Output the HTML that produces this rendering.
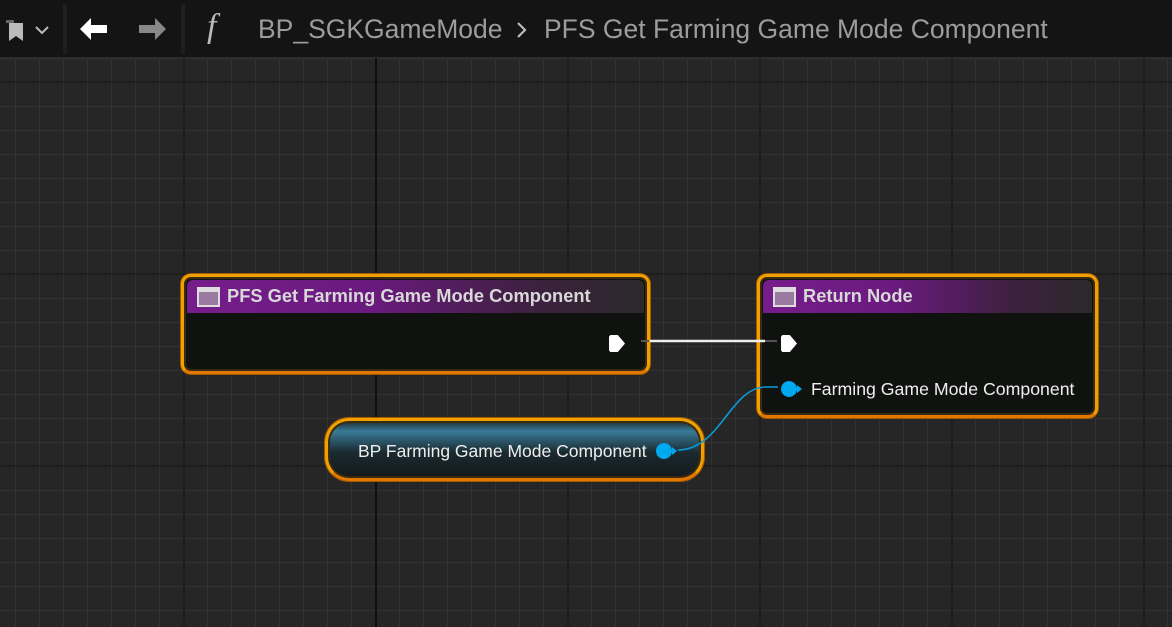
<!DOCTYPE html>
<html><head><style>
*{margin:0;padding:0;box-sizing:border-box}
body{width:1172px;height:627px;overflow:hidden;position:relative;font-family:"Liberation Sans",sans-serif;
background-color:#262626;
background-image:
linear-gradient(90deg,#0e0e0e 0 2px,transparent 2px),
linear-gradient(0deg,#0e0e0e 0 2px,transparent 2px),
linear-gradient(90deg,#1e1e1e 0 2px,transparent 2px),
linear-gradient(0deg,#1e1e1e 0 2px,transparent 2px),
linear-gradient(90deg,#323232 0 1px,transparent 1px),
linear-gradient(0deg,#323232 0 1px,transparent 1px);
background-size:2000px 2000px,2000px 2000px,192px 192px,192px 192px,24px 24px,24px 24px;
background-position:375px 0,0 274px,183px 0,0 83px,15px 0,0 11px;
background-repeat:no-repeat,no-repeat,repeat,repeat,repeat,repeat;}
.top{position:absolute;left:0;top:0;width:1172px;height:58px;background:#141414;border-bottom:1px solid #2a2a2a}
.sep{position:absolute;top:4px;width:4px;height:50px;background:#1f1f1f}
.crumb{position:absolute;top:14px;font-size:26.5px;color:#9c9c9c}
.node{position:absolute;border:3px solid #f0a000;border-radius:10px;background:#101210;box-shadow:0 0 0 1px #a55a00, inset 0 0 0 2px #3a2a10;border-bottom-color:#e07800}
.hdr{position:absolute;left:3px;right:3px;top:3px;height:33px;border-radius:6px 6px 0 0;background:linear-gradient(90deg,#761d8c,#6a1a7e 40%,#3e2040 75%,#2a2a2a);}
.hdr .ic{position:absolute;left:10px;top:7px;width:23px;height:20px;border:2px solid #ddd;border-top-width:5px;background:#9a7aa0}
.hdr span{position:absolute;left:40px;top:5px;font-size:18.3px;font-weight:bold;color:#d8d8d8}
.exec{position:absolute;width:16px;height:17px;background:#fff;clip-path:polygon(0 10%,8% 0,55% 0,100% 50%,55% 100%,8% 100%,0 90%)}
.dot{position:absolute;width:16px;height:16px;border-radius:50%;background:#00a8f0}
.dot:after{content:"";position:absolute;right:-5px;top:4px;border-left:5px solid #00a8f0;border-top:4px solid transparent;border-bottom:4px solid transparent}
</style></head><body>
<div class="top">
 <svg style="position:absolute;left:6px;top:20px" width="20" height="22" viewBox="0 0 20 22"><path d="M0 0h8v17l-1-1V3H0z" fill="#666"/><path d="M3 3h14v18l-7-5-7 5z" fill="#bbb"/></svg>
 <svg style="position:absolute;left:34px;top:25px" width="16" height="10"><path d="M2 2l6 6 6-6" stroke="#bbb" stroke-width="2" fill="none"/></svg>
 <div class="sep" style="left:63px"></div>
 <svg style="position:absolute;left:79px;top:17px" width="30" height="24"><path d="M1 12L12 1v7h16v8H12v7z" fill="#fff"/></svg>
 <svg style="position:absolute;left:137px;top:17px" width="30" height="24"><path d="M29 12L18 1v7H2v8h16v7z" fill="#888"/></svg>
 <div class="sep" style="left:181px"></div>
 <div style="position:absolute;left:207px;top:8px;font-family:'Liberation Serif',serif;font-style:italic;font-size:34px;color:#bbb">f</div>
 <div class="crumb" style="left:258px">BP_SGKGameMode</div>
 <svg style="position:absolute;left:515px;top:21px" width="14" height="18"><path d="M3 2l7 7-7 7" stroke="#bbb" stroke-width="2.2" fill="none"/></svg>
 <div class="crumb" style="left:544px">PFS Get Farming Game Mode Component</div>
</div>
<div class="node" style="left:181px;top:274px;width:469px;height:100px">
 <div class="hdr"><div class="ic"></div><span>PFS Get Farming Game Mode Component</span></div>
 <div class="exec" style="left:425px;top:58px"></div>
</div>
<div class="node" style="left:757px;top:274px;width:341px;height:144px">
 <div class="hdr"><div class="ic"></div><span>Return Node</span></div>
 <div class="exec" style="left:21px;top:58px"></div>
 <div class="dot" style="left:21px;top:104px"></div>
 <div style="position:absolute;left:51px;top:102px;font-size:17.7px;color:#eee">Farming Game Mode Component</div>
</div>
<div class="node" style="left:325px;top:418px;width:379px;height:63px;border-radius:24px;background:linear-gradient(180deg,#1e2a30 0,#3a7a98 18%,#1a2a30 55%,#14181a)">
 <div style="position:absolute;left:30px;top:20px;font-size:17.5px;color:#eee">BP Farming Game Mode Component</div>
 <div class="dot" style="left:328px;top:22px"></div>
</div>
<svg style="position:absolute;left:0;top:0" width="1172" height="627">
 <path d="M650 341H765" stroke="#eee" stroke-width="2.5"/>
 <path d="M765 341h12M641 341h8" stroke="#555" stroke-width="2"/>
 <path d="M678 450 C720 450,730 388,765 387 L778 387" stroke="#0a9ad8" stroke-width="1.6" fill="none"/>
</svg>
</body></html>
